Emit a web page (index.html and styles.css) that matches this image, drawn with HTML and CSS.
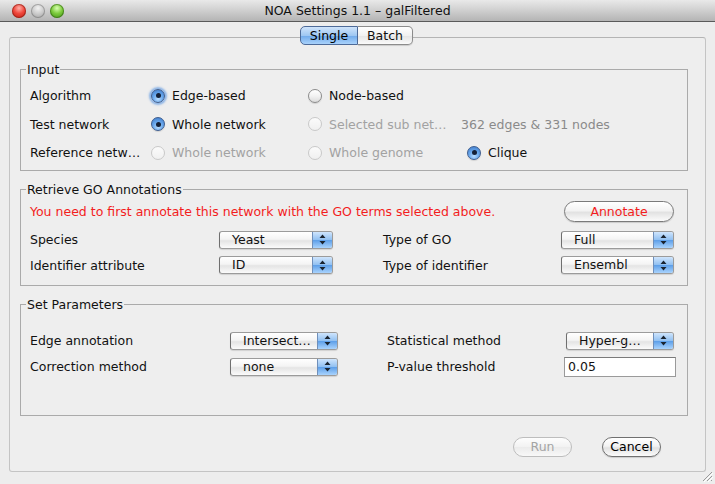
FILE: index.html
```html
<!DOCTYPE html>
<html>
<head>
<meta charset="utf-8">
<link rel="stylesheet" href="styles.css">
</head>
<body>
<div class="window">
  <header class="titlebar">
    <div class="lights">
      <span class="light red"></span>
      <span class="light gray"></span>
      <span class="light green"></span>
    </div>
    <div class="title">NOA Settings 1.1 – galFiltered</div>
    <div></div>
  </header>
  <main class="content">
    <div class="tabs">
      <span class="tab tab-sel">Single</span>
      <span class="tab tab-off">Batch</span>
    </div>
    <div class="panel">
      <fieldset class="group group-input">
        <legend>Input</legend>
        <div class="input-grid">
          <span class="label">Algorithm</span>
          <span class="opt"><span class="radio on focus"></span>Edge-based</span>
          <span class="opt"><span class="radio"></span>Node-based</span>
          <span></span>

          <span class="label">Test network</span>
          <span class="opt"><span class="radio on"></span>Whole network</span>
          <span class="opt dis"><span class="radio"></span>Selected sub net…</span>
          <span class="info">362 edges &amp; 331 nodes</span>

          <span class="label">Reference netw…</span>
          <span class="opt dis"><span class="radio"></span>Whole network</span>
          <span class="opt dis"><span class="radio"></span>Whole genome</span>
          <span class="opt"><span class="radio on"></span>Clique</span>
        </div>
      </fieldset>

      <fieldset class="group group-go">
        <legend>Retrieve GO Annotations</legend>
        <div class="msg-row">
          <span class="warn">You need to first annotate this network with the GO terms selected above.</span>
          <span class="btn btn-annotate">Annotate</span>
        </div>
        <div class="go-grid">
          <span class="label">Species</span>
          <span class="select"><span class="sel-text">Yeast</span><span class="sel-arrows"><svg width="7" height="11" viewBox="0 0 7 11"><path d="M3.5 0.5 L6.5 4 H0.5 Z M3.5 10.5 L6.5 7 H0.5 Z" fill="#1a2430"/></svg></span></span>
          <span class="label">Type of GO</span>
          <span class="select"><span class="sel-text">Full</span><span class="sel-arrows"><svg width="7" height="11" viewBox="0 0 7 11"><path d="M3.5 0.5 L6.5 4 H0.5 Z M3.5 10.5 L6.5 7 H0.5 Z" fill="#1a2430"/></svg></span></span>

          <span class="label">Identifier attribute</span>
          <span class="select"><span class="sel-text">ID</span><span class="sel-arrows"><svg width="7" height="11" viewBox="0 0 7 11"><path d="M3.5 0.5 L6.5 4 H0.5 Z M3.5 10.5 L6.5 7 H0.5 Z" fill="#1a2430"/></svg></span></span>
          <span class="label">Type of identifier</span>
          <span class="select"><span class="sel-text">Ensembl</span><span class="sel-arrows"><svg width="7" height="11" viewBox="0 0 7 11"><path d="M3.5 0.5 L6.5 4 H0.5 Z M3.5 10.5 L6.5 7 H0.5 Z" fill="#1a2430"/></svg></span></span>
        </div>
      </fieldset>

      <fieldset class="group group-param">
        <legend>Set Parameters</legend>
        <div class="param-grid">
          <span class="label">Edge annotation</span>
          <span class="select"><span class="sel-text">Intersect…</span><span class="sel-arrows"><svg width="7" height="11" viewBox="0 0 7 11"><path d="M3.5 0.5 L6.5 4 H0.5 Z M3.5 10.5 L6.5 7 H0.5 Z" fill="#1a2430"/></svg></span></span>
          <span class="label">Statistical method</span>
          <span class="select"><span class="sel-text">Hyper-g…</span><span class="sel-arrows"><svg width="7" height="11" viewBox="0 0 7 11"><path d="M3.5 0.5 L6.5 4 H0.5 Z M3.5 10.5 L6.5 7 H0.5 Z" fill="#1a2430"/></svg></span></span>

          <span class="label">Correction method</span>
          <span class="select"><span class="sel-text">none</span><span class="sel-arrows"><svg width="7" height="11" viewBox="0 0 7 11"><path d="M3.5 0.5 L6.5 4 H0.5 Z M3.5 10.5 L6.5 7 H0.5 Z" fill="#1a2430"/></svg></span></span>
          <span class="label">P-value threshold</span>
          <span class="field">0.05</span>
        </div>
      </fieldset>

      <div class="footer">
        <span class="btn btn-dis">Run</span>
        <span class="btn">Cancel</span>
      </div>
    </div>
  </main>
  <svg class="grip" width="12" height="12" viewBox="0 0 12 12">
    <path d="M11 2 L2 11 M11 6 L6 11 M11 10 L10 11" stroke="#9a9a9a" stroke-width="1"/>
    <path d="M12 3 L3 12 M12 7 L7 12" stroke="#ffffff" stroke-width="1"/>
  </svg>
</div>
</body>
</html>
```

FILE: styles.css
```css
* { box-sizing: border-box; }

html, body {
  margin: 0;
  padding: 0;
}

body {
  width: 715px;
  height: 484px;
  background: #ededed;
  font-family: "DejaVu Sans", "Liberation Sans", sans-serif;
  font-size: 12.5px;
  color: #111;
  overflow: hidden;
}

.window {
  position: relative;
  width: 715px;
  height: 484px;
  background: #ededed;
}

/* title bar */
.titlebar {
  height: 22px;
  display: grid;
  grid-template-columns: 1fr auto 1fr;
  align-items: center;
  background: linear-gradient(#e9e9e9, #cfcfcf 50%, #b4b4b4);
  border-bottom: 1px solid #5a5a5a;
}

.lights {
  display: flex;
  gap: 5px;
  padding-left: 12px;
  align-items: center;
}

.light {
  width: 14px;
  height: 14px;
  border-radius: 50%;
  display: block;
}

.red {
  background: radial-gradient(circle at 50% 30%, #ffb0a8 0, #f0473c 45%, #b81c10 100%);
  box-shadow: inset 0 0 0 1px rgba(120, 20, 10, 0.5);
}

.gray {
  background: radial-gradient(circle at 50% 30%, #f2f2f2 0, #c9c9c9 50%, #9d9d9d 100%);
  box-shadow: inset 0 0 0 1px rgba(90, 90, 90, 0.4);
}

.green {
  background: radial-gradient(circle at 50% 30%, #d8ffb0 0, #7ccb3c 45%, #3e8a16 100%);
  box-shadow: inset 0 0 0 1px rgba(40, 90, 10, 0.5);
}

.title {
  font-size: 12.5px;
  color: #111;
  line-height: 22px;
}

/* content */
.content {
  padding: 4px 9px 0 9px;
}

.tabs {
  display: flex;
  justify-content: center;
  position: relative;
  z-index: 1;
  margin-bottom: -8px;
  padding-right: 2px;
}

.tab {
  height: 19px;
  line-height: 17px;
  font-size: 12.5px;
  text-align: center;
}

.tab-sel {
  width: 58px;
  border: 1px solid #4d6a98;
  border-radius: 5px 0 0 5px;
  background: linear-gradient(#cfe4fb, #9fc7f2 50%, #6fa9ea 51%, #a9d2fb);
  color: #000;
}

.tab-off {
  width: 55px;
  border: 1px solid #8c8c8c;
  border-left: none;
  border-radius: 0 5px 5px 0;
  background: linear-gradient(#ffffff, #f1f1f1 50%, #e4e4e4 51%, #fafafa);
  box-shadow: 0 1px 1px rgba(0,0,0,0.15);
}

.panel {
  height: 435px;
  border: 1px solid #c4c4c4;
  border-top-color: #b4b4b4;
  border-radius: 3px;
  background: #eeeeee;
  padding: 24px 17px 0 10px;
  display: flex;
  flex-direction: column;
}

/* groups */
.group {
  margin: 0;
  border: 1px solid #aaaaaa;
  padding: 0 12px 0 9px;
  min-width: 0;
}

.group legend {
  padding: 0 1px;
  margin-left: -4px;
  font-size: 12.5px;
  line-height: 15px;
  color: #111;
}

.group-input {
  padding-top: 4.5px;
  padding-bottom: 2.5px;
}

.input-grid {
  display: grid;
  grid-template-columns: 121px 157px 159px 1fr;
  grid-auto-rows: 28.5px;
  align-items: center;
}

.opt {
  display: flex;
  align-items: center;
  white-space: nowrap;
}

.opt.dis { color: #a2a2a2; }

.info {
  color: #8a8a8a;
  margin-left: -6px;
}

.radio {
  width: 14px;
  height: 14px;
  border-radius: 50%;
  margin-right: 7px;
  flex: none;
  position: relative;
  border: 1px solid #8b8b8b;
  background: linear-gradient(#ffffff, #f2f2f2 50%, #dcdcdc);
  box-shadow: 0 1px 1px rgba(0,0,0,0.12);
}

.opt.dis .radio {
  border-color: #c9c9c9;
  background: linear-gradient(#fbfbfb, #f0f0f0);
  box-shadow: none;
}

.radio.on {
  border-color: #3d5d8f;
  background: radial-gradient(circle at 50% 75%, #b8dcff 0, #6aa8ec 45%, #3b78c8 100%);
}

.radio.on::after {
  content: "";
  position: absolute;
  left: 3.5px;
  top: 3.5px;
  width: 5px;
  height: 5px;
  border-radius: 50%;
  background: #152036;
}

.radio.focus {
  box-shadow: 0 0 2px 2px rgba(86, 148, 226, 0.65);
}

.group-go {
  margin-top: 11px;
  padding-top: 4px;
  padding-bottom: 10px;
}

.msg-row {
  display: flex;
  align-items: center;
  justify-content: space-between;
  height: 22px;
  padding-right: 1px;
}

.warn { color: #f31d1d; }

.go-grid {
  display: grid;
  grid-template-columns: 189px 114px 50px 178px 113px;
  grid-template-rows: 20px 20px;
  row-gap: 5.5px;
  margin-top: 7px;
  align-items: center;
}

.go-grid > .label:nth-child(3),
.go-grid > .label:nth-child(7) {
  grid-column: 4;
}

.group-param {
  margin-top: 11px;
  padding-top: 18.5px;
  padding-bottom: 38px;
}

.param-grid {
  display: grid;
  grid-template-columns: 200px 108px 49px 179px 108px;
  grid-template-rows: 20px 20px;
  row-gap: 6px;
  align-items: center;
}

.param-grid > .label:nth-child(3),
.param-grid > .label:nth-child(7) {
  grid-column: 4;
}

/* popup select */
.select {
  display: flex;
  height: 18px;
  border: 1px solid #9b9b9b;
  border-left-color: #6f6f6f;
  border-radius: 3px;
  background: linear-gradient(#ffffff, #f4f4f4 45%, #e4e4e4 55%, #fbfbfb);
  box-shadow: 0 1px 1px rgba(0,0,0,0.12);
  overflow: hidden;
}

.sel-text {
  flex: 1;
  padding-left: 12px;
  line-height: 16px;
  white-space: nowrap;
}

.sel-arrows {
  width: 20px;
  display: flex;
  align-items: center;
  justify-content: center;
  border-left: 1px solid #6f8fba;
  background: linear-gradient(#cfe5fd, #8fbff1 50%, #5c9ee8 51%, #a9d3fd);
}

.field {
  height: 20px;
  margin: 0 -2px 0 -2px;
  border: 1px solid #9a9a9a;
  border-top-color: #7a7a7a;
  background: #ffffff;
  padding-left: 3px;
  line-height: 18px;
}

/* buttons */
.btn {
  display: inline-block;
  height: 20px;
  width: 59px;
  line-height: 18px;
  text-align: center;
  border: 1px solid #707070;
  border-radius: 10px;
  background: linear-gradient(#ffffff, #f3f3f3 45%, #e2e2e2 55%, #fbfbfb);
  box-shadow: 0 1px 1px rgba(0,0,0,0.15);
  color: #000;
}

.btn-annotate {
  width: 110px;
  height: 21px;
  line-height: 19px;
  border-radius: 11px;
  color: #f31d1d;
  border-color: #7a7a7a;
}

.btn-dis {
  color: #a4a4a4;
  border-color: #bdbdbd;
  box-shadow: none;
  background: linear-gradient(#fdfdfd, #f2f2f2 50%, #ebebeb 51%, #f8f8f8);
}

.footer {
  display: flex;
  justify-content: flex-end;
  gap: 30px;
  padding-top: 21px;
  padding-right: 27px;
}

.grip {
  position: absolute;
  right: 2px;
  bottom: 2px;
}
```
